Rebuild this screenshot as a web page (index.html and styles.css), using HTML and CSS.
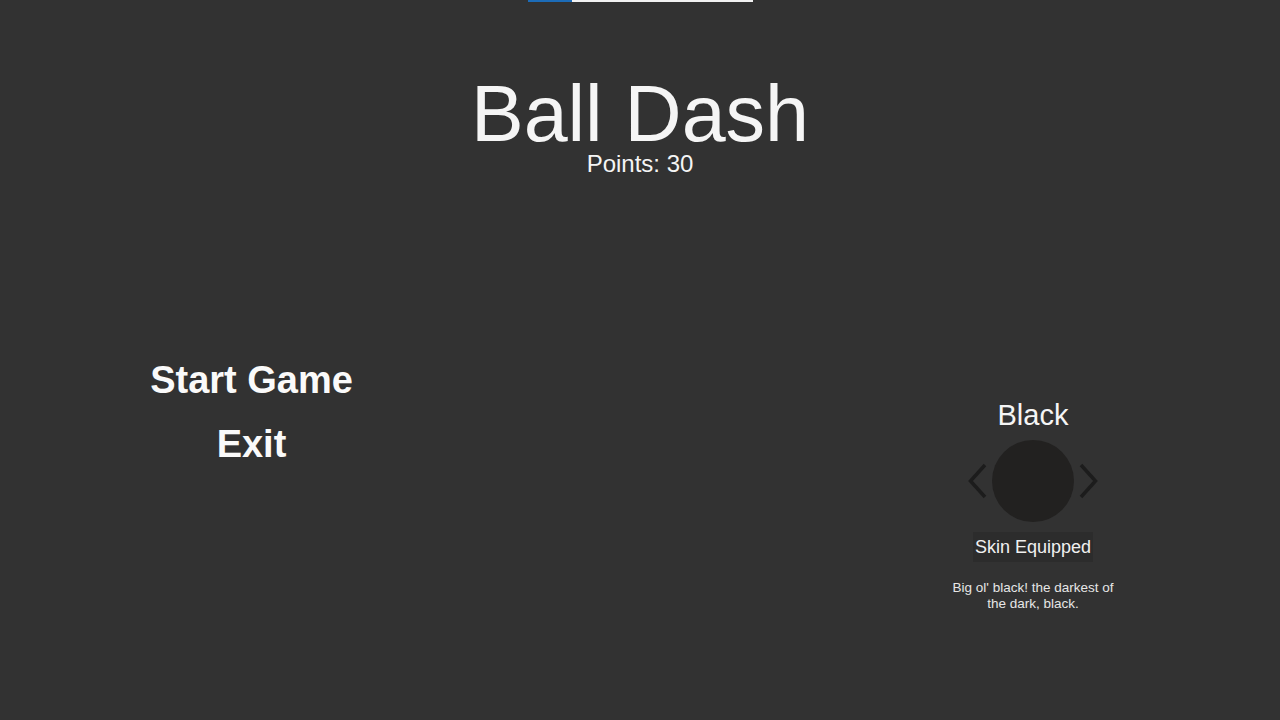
FILE: index.html
```html
<!DOCTYPE html>
<html>
<head>
<meta charset="utf-8">
<link rel="stylesheet" href="styles.css">
</head>
<body>
<div class="progress"><div class="progress-fill"></div></div>
<header class="header">
  <h1 class="title">Ball Dash</h1>
  <div class="points">Points: 30</div>
</header>
<main class="main">
  <nav class="menu">
    <div class="menu-item">Start Game</div>
    <div class="menu-item exit">Exit</div>
  </nav>
  <section class="skins">
    <div class="skin-name">Black</div>
    <div class="selector">
      <svg class="arrow" width="20" height="36" viewBox="0 0 20 36"><polyline points="17,2 2.5,18 17,34" fill="none" stroke="#1c1c1c" stroke-width="3.5"/></svg>
      <div class="ball"></div>
      <svg class="arrow" width="20" height="36" viewBox="0 0 20 36"><polyline points="3,2 17.5,18 3,34" fill="none" stroke="#1c1c1c" stroke-width="3.5"/></svg>
    </div>
    <div class="equipped">Skin Equipped</div>
    <p class="desc">Big ol' black! the darkest of the dark, black.</p>
  </section>
</main>
</body>
</html>
```
FILE: styles.css
```css
html, body {
  margin: 0;
  padding: 0;
}
body {
  background: #323232;
  width: 1280px;
  height: 720px;
  overflow: hidden;
  font-family: "Liberation Sans", Arial, sans-serif;
  color: #f5f5f5;
}
.progress {
  width: 225px;
  height: 2px;
  margin: 0 auto 0 528px;
  background: #f2f2f2;
  display: flex;
}
.progress-fill {
  width: 44px;
  background: #1c6cb8;
}
.header {
  text-align: center;
  padding-top: 74px;
}
.title {
  margin: 0;
  font-size: 79px;
  font-weight: normal;
  line-height: 76px;
}
.points {
  font-size: 24px;
  line-height: 24px;
}
.main {
  display: flex;
  justify-content: space-between;
  align-items: flex-start;
  padding: 0 147px 0 101px;
}
.menu {
  width: 301px;
  margin-top: 185px;
  display: flex;
  flex-direction: column;
  align-items: center;
  gap: 26px;
}
.menu-item {
  font-size: 38px;
  line-height: 38px;
  font-weight: bold;
  color: #fafafa;
}
.skins {
  width: 200px;
  margin-top: 225px;
  display: flex;
  flex-direction: column;
  align-items: center;
}
.skin-name {
  font-size: 29px;
  line-height: 29px;
}
.selector {
  margin-top: 10px;
  display: flex;
  align-items: center;
  gap: 4px;
}
.arrow {
  display: block;
}
.ball {
  width: 82px;
  height: 82px;
  border-radius: 50%;
  background: #222120;
}
.equipped {
  margin-top: 10px;
  width: 120px;
  height: 30px;
  line-height: 30px;
  text-align: center;
  background: #2c2c2c;
  font-size: 18px;
  color: #f0f0f0;
}
.desc {
  margin: 18px 0 0;
  width: 176px;
  text-align: center;
  font-size: 13.5px;
  line-height: 16px;
  color: #e6e6e6;
}
```
